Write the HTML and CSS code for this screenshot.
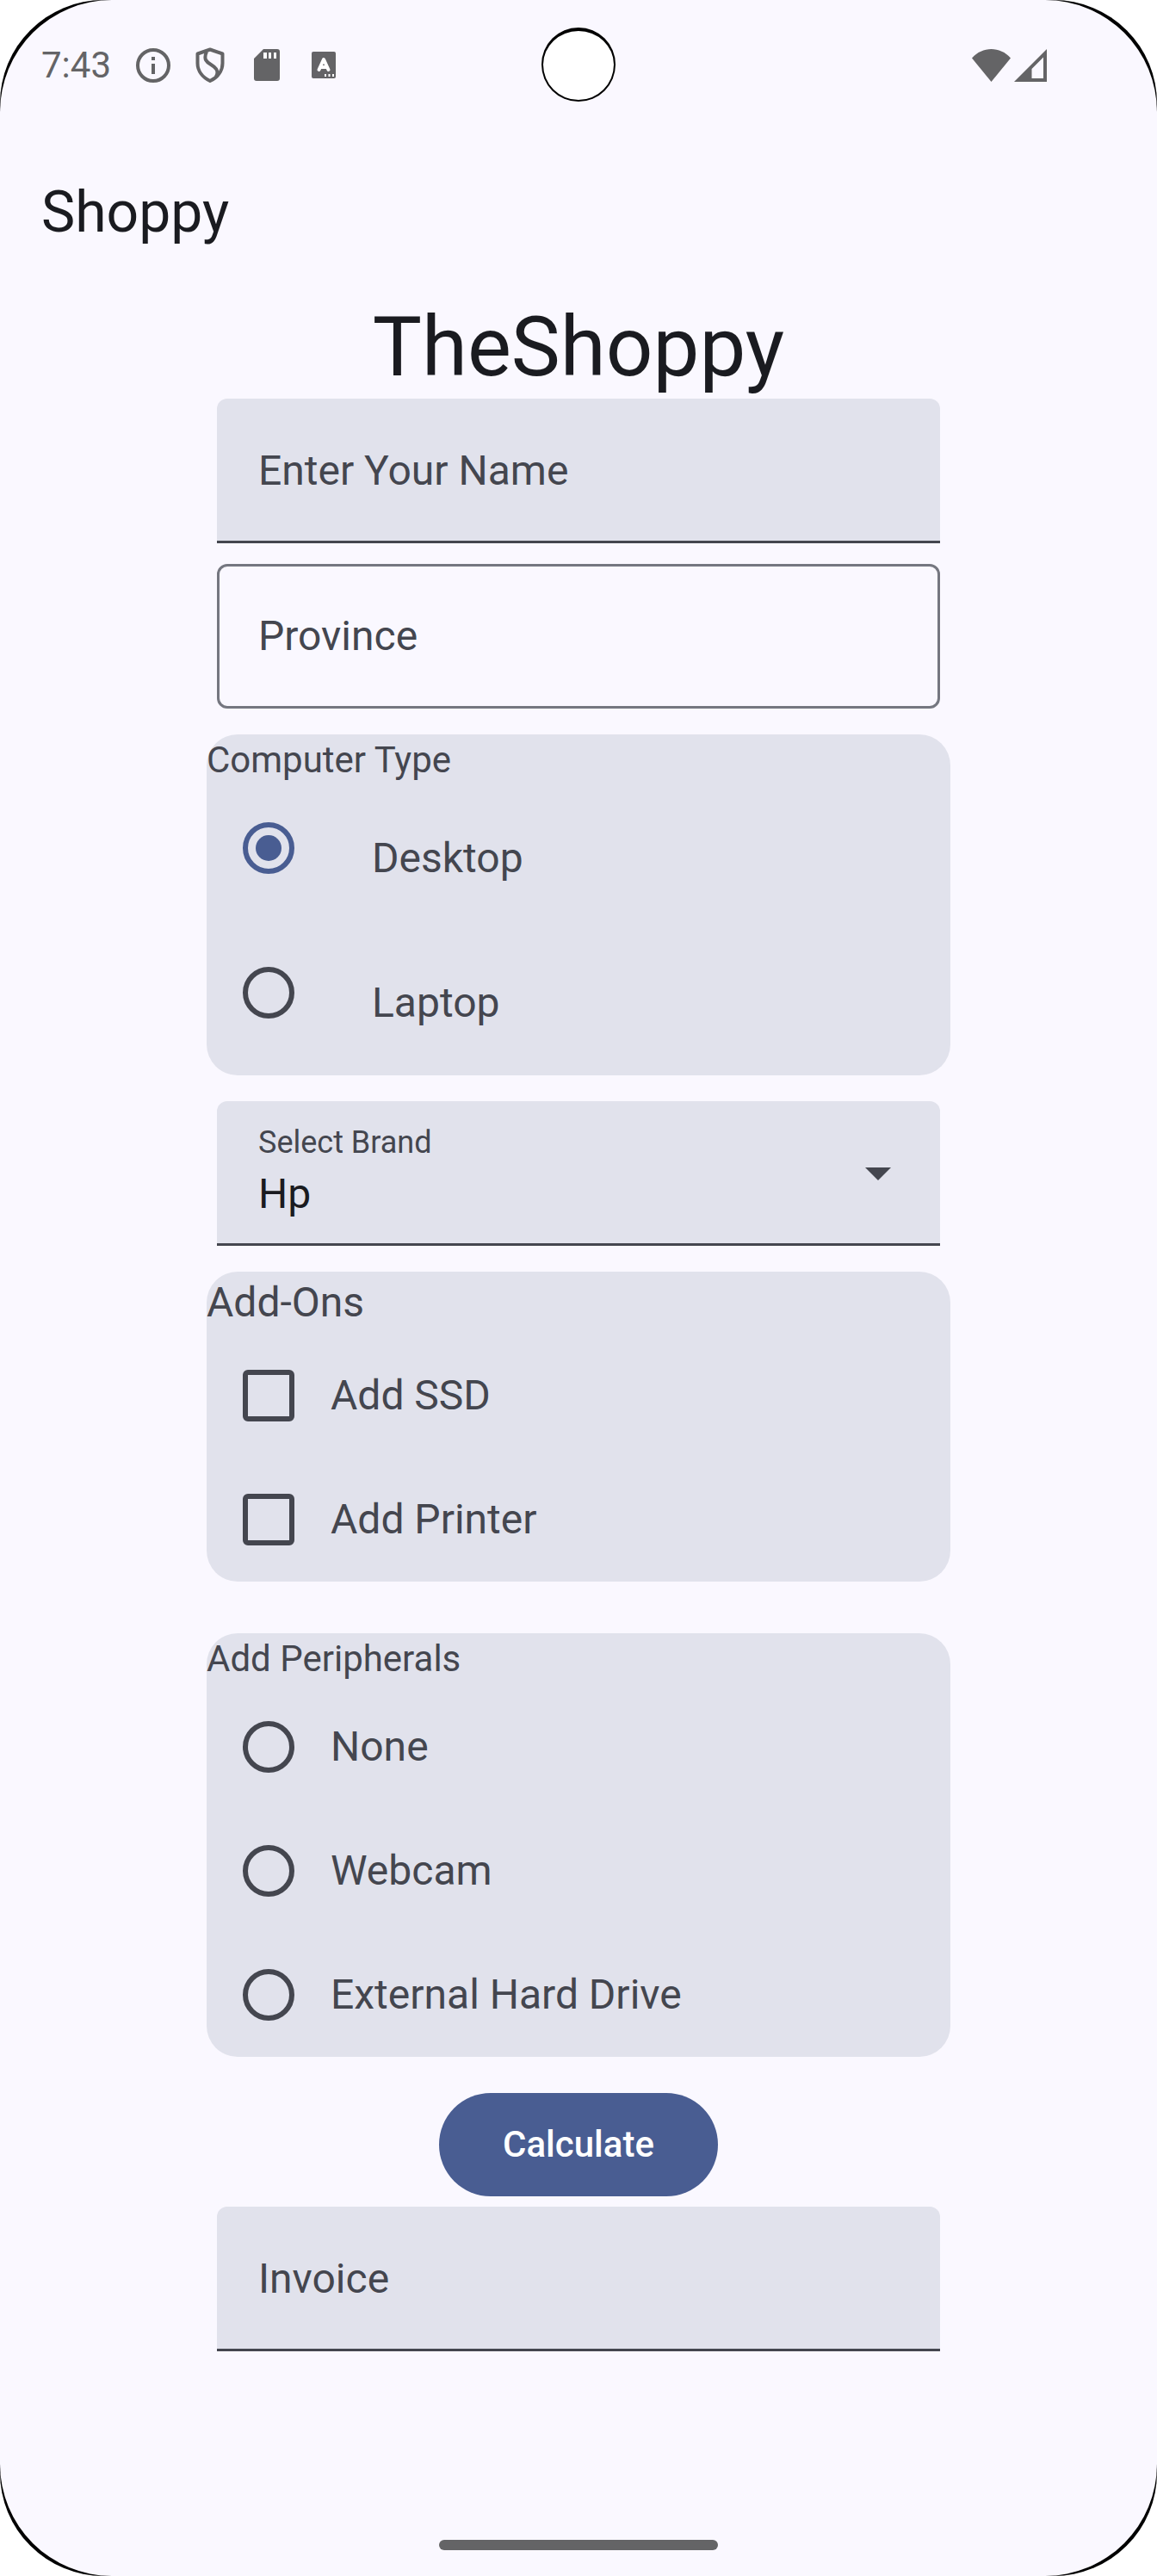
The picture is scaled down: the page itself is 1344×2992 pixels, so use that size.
FILE: index.html
```html
<!DOCTYPE html>
<html lang="en">
<head>
<meta charset="utf-8">
<meta name="viewport" content="width=device-width, initial-scale=1">
<title>Shoppy</title>
<link rel="stylesheet" href="styles.css">
</head>
<body>
<div class="device">
  <div class="screen">
    <div class="status-bar">
      <div class="status-left">
        <span class="clock">7:43</span>
        <div class="status-icons">
          <svg class="status-icon" viewBox="0 0 42 42" aria-hidden="true"><circle cx="21" cy="21" r="18" fill="none" stroke="currentColor" stroke-width="4"/><path d="M19 11h4v4h-4zM19 19h4v12h-4z" fill="currentColor"/></svg>
          <svg class="status-icon" viewBox="0 0 42 42" aria-hidden="true"><path d="M21 2.500 6.500 7.500v11c0 9 6 16.500 14.500 20.500 8.500-4 14.500-11.500 14.500-20.500v-11z" fill="none" stroke="currentColor" stroke-width="4" stroke-linejoin="round"/><path d="M17 5c-4 9 0 12 5 15s10 7 6 14" fill="none" stroke="currentColor" stroke-width="4"/></svg>
          <svg class="status-icon" viewBox="0 0 42 42" aria-hidden="true"><path fill="#fff" d="M17 6h15v7H17z"/><path fill="currentColor" fill-rule="evenodd" d="M17 2h16a3 3 0 0 1 3 3v31a3 3 0 0 1-3 3H9a3 3 0 0 1-3-3V13zM17 6v7h4V6zm6 0v7h3V6zm6 0v7h3V6z"/></svg>
          <svg class="status-icon" viewBox="0 0 42 42" aria-hidden="true"><rect x="7" y="5" width="28" height="31" rx="2" fill="currentColor"/><path d="M15.500 26 21 14 26.500 26M17.500 23h7" fill="none" stroke="#fff" stroke-width="4" stroke-linecap="round" stroke-linejoin="round"/><path d="M22 31h2v3h-2zM26.500 31h2v3h-2zM31 31h2v3h-2z" fill="#fff"/></svg>
        </div>
      </div>
      <div class="camera"></div>
      <div class="status-right">
        <svg class="wifi" viewBox="0 0 45 38" aria-hidden="true"><path fill="currentColor" d="M0 10.500C12-3.500 33-3.500 45 10.500L22.500 38z"/></svg>
        <svg class="signal" viewBox="0 0 38 38" aria-hidden="true"><path fill="currentColor" fill-rule="evenodd" d="M38 0v38H0zM34 9.500 20.500 23v11H34z"/></svg>
      </div>
    </div>
    <header class="app-bar">Shoppy</header>
    <main class="content">
      <h1 class="title">TheShoppy</h1>
      <form class="form">
        <div class="field filled">
          <input class="field-input" id="name" type="text" placeholder=" ">
          <label class="field-label" for="name">Enter Your Name</label>
        </div>
        <div class="field outlined">
          <input class="field-input" id="province" type="text" placeholder=" ">
          <label class="field-label" for="province">Province</label>
        </div>
        <fieldset class="card">
          <legend class="card-title">Computer Type</legend>
          <div class="option tall">
            <span class="touch"><input class="radio" type="radio" name="type" id="desktop" checked></span>
            <label class="option-label" for="desktop">Desktop</label>
          </div>
          <div class="option tall">
            <span class="touch"><input class="radio" type="radio" name="type" id="laptop"></span>
            <label class="option-label" for="laptop">Laptop</label>
          </div>
        </fieldset>
        <div class="field filled dropdown">
          <label class="dropdown-label" for="brand">Select Brand</label>
          <select class="dropdown-select" id="brand"><option>Hp</option></select>
          <svg class="arrow" viewBox="0 0 30 15" aria-hidden="true"><path fill="currentColor" d="M0 0h30L15 15z"/></svg>
        </div>
        <fieldset class="card">
          <legend class="card-title large">Add-Ons</legend>
          <div class="option">
            <span class="touch"><input class="checkbox" type="checkbox" id="ssd"></span>
            <label class="option-label" for="ssd">Add SSD</label>
          </div>
          <div class="option">
            <span class="touch"><input class="checkbox" type="checkbox" id="printer"></span>
            <label class="option-label" for="printer">Add Printer</label>
          </div>
        </fieldset>
        <fieldset class="card peripherals">
          <legend class="card-title">Add Peripherals</legend>
          <div class="option">
            <span class="touch"><input class="radio" type="radio" name="peripheral" id="none"></span>
            <label class="option-label" for="none">None</label>
          </div>
          <div class="option">
            <span class="touch"><input class="radio" type="radio" name="peripheral" id="webcam"></span>
            <label class="option-label" for="webcam">Webcam</label>
          </div>
          <div class="option">
            <span class="touch"><input class="radio" type="radio" name="peripheral" id="drive"></span>
            <label class="option-label" for="drive">External Hard Drive</label>
          </div>
        </fieldset>
        <button class="calculate" type="button">Calculate</button>
        <div class="field filled">
          <input class="field-input" id="invoice" type="text" placeholder=" ">
          <label class="field-label" for="invoice">Invoice</label>
        </div>
      </form>
    </main>
    <div class="nav-bar"><span class="nav-handle"></span></div>
  </div>
</div>
</body>
</html>
```
FILE: styles.css
```css
:root {
  --surface: #faf8ff;
  --container: #e1e2ec;
  --on-surface: #1a1b20;
  --on-variant: #44464f;
  --outline: #757780;
  --primary: #495d92;
}

* { box-sizing: border-box; }

body {
  margin: 0;
  background: #fff;
  color: var(--on-surface);
  font-family: Roboto, "Noto Sans", sans-serif;
}

.device {
  background: #000;
  border-radius: 120px;
}

.screen {
  display: flex;
  flex-direction: column;
  min-height: 100vh;
  background: var(--surface);
  border-radius: 130px;
}

/* Status bar */
.status-bar {
  display: grid;
  grid-template-columns: 1fr auto 1fr;
  align-items: center;
  height: 151px;
  padding: 0 128px 0 48px;
  color: #646466;
}

.status-left {
  display: flex;
  align-items: center;
  gap: 28px;
}

.clock {
  font-size: 42px;
  line-height: 48px;
}

.status-icons {
  display: flex;
  gap: 24px;
}

.status-icon {
  width: 42px;
  height: 42px;
}

.camera {
  position: absolute;
  top: 32px;
  left: 50%;
  width: 86px;
  height: 86px;
  margin-left: -43px;
  background: #fff;
  border: 2px solid #000;
  border-top-width: 4px;
  border-radius: 50%;
}

.status-right {
  display: flex;
  grid-column: 3;
  justify-content: flex-end;
  align-items: center;
  gap: 4px;
}

.wifi { width: 45px; height: 38px; }
.signal { width: 38px; height: 38px; }

.app-bar {
  padding: 0 48px;
  font-size: 66px;
  line-height: 192px;
}

/* Form */
.content {
  flex: 1;
  width: 100%;
  max-width: 864px;
  margin: 0 auto;
}

.title {
  margin: 0;
  font-size: 96px;
  font-weight: 400;
  line-height: 120px;
  text-align: center;
}

.form {
  display: flex;
  flex-direction: column;
}

.field {
  display: grid;
  height: 168px;
  margin: 0 12px;
  color: var(--on-variant);
}

.filled {
  background: var(--container);
  background-image: linear-gradient(var(--on-variant), var(--on-variant));
  background-position: bottom;
  background-repeat: no-repeat;
  background-size: 100% 3px;
  border-radius: 12px 12px 0 0;
}

.outlined {
  margin-top: 24px;
  border: 3px solid var(--outline);
  border-radius: 12px;
}

.field-input,
.field-label {
  grid-area: 1 / 1;
  padding: 0 48px;
  font-size: 48px;
  line-height: 72px;
}

.outlined .field-input,
.outlined .field-label { padding: 0 45px; }

.field-input {
  width: 100%;
  background: none;
  border: 0;
  outline: 0;
  color: var(--on-surface);
  font-family: inherit;
}

.field-label {
  align-self: center;
  pointer-events: none;
}

.field-input:not(:placeholder-shown) + .field-label { visibility: hidden; }

.card {
  min-width: 0;
  margin: 30px 0 0;
  padding: 0;
  background: var(--container);
  border: 0;
  border-radius: 36px;
  color: var(--on-variant);
}

.peripherals { margin-top: 60px; }

.card-title {
  float: left;
  width: 100%;
  padding: 0;
  font-size: 42px;
  line-height: 60px;
}

.card-title.large {
  font-size: 48px;
  line-height: 72px;
}

.option {
  display: flex;
  align-items: center;
  clear: both;
  height: 144px;
}

.option.tall {
  gap: 48px;
  height: 168px;
}

.touch {
  display: grid;
  place-items: center;
  width: 144px;
  height: 144px;
}

.tall .touch { align-self: flex-start; }

.option-label {
  font-size: 48px;
  line-height: 72px;
}

.radio,
.checkbox {
  appearance: none;
  width: 60px;
  height: 60px;
  margin: 0;
  border: 6px solid var(--on-variant);
}

.radio { border-radius: 50%; }
.checkbox { border-radius: 6px; }

.radio:checked {
  padding: 9px;
  background: var(--primary) content-box;
  border-color: var(--primary);
}

.checkbox:checked {
  background: var(--primary);
  border-color: var(--primary);
}

.dropdown {
  grid-template-columns: 1fr auto;
  grid-template-rows: 48px 72px;
  margin-top: 30px;
  padding: 24px 57px 24px 48px;
}

.dropdown-label {
  font-size: 36px;
  line-height: 48px;
}

.dropdown-select {
  grid-row: 2;
  appearance: none;
  padding: 0;
  background: none;
  border: 0;
  color: var(--on-surface);
  font-family: inherit;
  font-size: 48px;
  line-height: 72px;
}

.arrow {
  grid-area: 1 / 2 / 3 / 3;
  align-self: center;
  width: 30px;
  height: 15px;
}

.calculate {
  align-self: center;
  min-width: 324px;
  margin: 42px 0 12px;
  padding: 0 72px;
  background: var(--primary);
  border: 0;
  border-radius: 60px;
  color: #fff;
  font-family: inherit;
  font-size: 42px;
  font-weight: 500;
  line-height: 120px;
}

/* Gesture navigation */
.nav-bar {
  display: flex;
  justify-content: center;
  align-items: center;
  height: 72px;
}

.nav-handle {
  width: 324px;
  height: 12px;
  background: #646466;
  border-radius: 6px;
}
```
